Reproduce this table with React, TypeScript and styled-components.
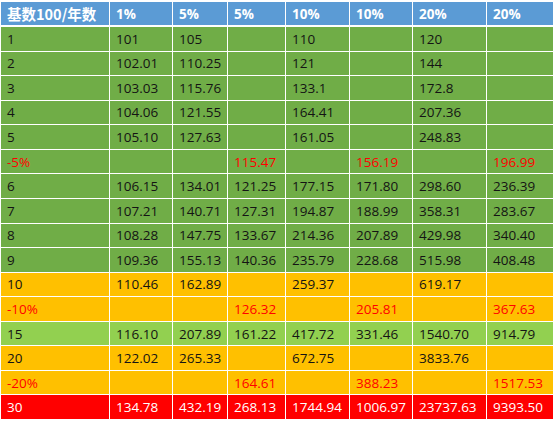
import React from "react";
import styled, { createGlobalStyle } from "styled-components";

const Global = createGlobalStyle`
  html, body { margin: 0; padding: 0; background: #ffffff; }
  body { font-family: "Open Sans", "Noto Sans CJK SC", sans-serif; }
`;

type Tone = "head" | "green" | "yellow" | "lime" | "red";

const BG: Record<Tone, string> = {
  head: "#5b9bd5",
  green: "#70ad47",
  yellow: "#ffc000",
  lime: "#92d050",
  red: "#ff0000",
};

const Sheet = styled.div`
  display: grid;
  grid-template-columns: 108px 62px 54px 57px 63px 62px 73px 66px;
  grid-template-rows: 24px repeat(16, 1fr);
  gap: 1px;
  height: 417px;
  width: 552px;
  margin: 2px 0 0 1px;
  background: #ffffff;
`;

const Row = styled.div`
  display: contents;
`;

const Cell = styled.div<{ $tone: Tone; $neg?: boolean }>`
  display: flex;
  align-items: center;
  padding-left: 6px;
  background: ${(p) => BG[p.$tone]};
  color: ${(p) =>
    p.$neg ? "#ff0000" : p.$tone === "head" || p.$tone === "red" ? "#ffffff" : "#141414"};
  font-size: 13.5px;
  font-weight: ${(p) => (p.$tone === "head" ? 700 : 400)};
  margin-bottom: ${(p) => (p.$tone === "head" ? "1px" : "0")};
  white-space: nowrap;
  overflow: hidden;
`;

const HeadLabel = styled.span`
  font-family: "Noto Sans CJK SC", "Open Sans", sans-serif;
  font-size: 14.5px;
  font-weight: 700;
`;

type R = { tone: Tone; neg?: boolean; cells: string[] };

const rows: R[] = [
  { tone: "green", cells: ["1", "101", "105", "", "110", "", "120", ""] },
  { tone: "green", cells: ["2", "102.01", "110.25", "", "121", "", "144", ""] },
  { tone: "green", cells: ["3", "103.03", "115.76", "", "133.1", "", "172.8", ""] },
  { tone: "green", cells: ["4", "104.06", "121.55", "", "164.41", "", "207.36", ""] },
  { tone: "green", cells: ["5", "105.10", "127.63", "", "161.05", "", "248.83", ""] },
  { tone: "green", neg: true, cells: ["-5%", "", "", "115.47", "", "156.19", "", "196.99"] },
  { tone: "green", cells: ["6", "106.15", "134.01", "121.25", "177.15", "171.80", "298.60", "236.39"] },
  { tone: "green", cells: ["7", "107.21", "140.71", "127.31", "194.87", "188.99", "358.31", "283.67"] },
  { tone: "green", cells: ["8", "108.28", "147.75", "133.67", "214.36", "207.89", "429.98", "340.40"] },
  { tone: "green", cells: ["9", "109.36", "155.13", "140.36", "235.79", "228.68", "515.98", "408.48"] },
  { tone: "yellow", cells: ["10", "110.46", "162.89", "", "259.37", "", "619.17", ""] },
  { tone: "yellow", neg: true, cells: ["-10%", "", "", "126.32", "", "205.81", "", "367.63"] },
  { tone: "lime", cells: ["15", "116.10", "207.89", "161.22", "417.72", "331.46", "1540.70", "914.79"] },
  { tone: "yellow", cells: ["20", "122.02", "265.33", "", "672.75", "", "3833.76", ""] },
  { tone: "yellow", neg: true, cells: ["-20%", "", "", "164.61", "", "388.23", "", "1517.53"] },
  { tone: "red", cells: ["30", "134.78", "432.19", "268.13", "1744.94", "1006.97", "23737.63", "9393.50"] },
];

const head = ["1%", "5%", "5%", "10%", "10%", "20%", "20%"];

export default function App() {
  return (
    <>
      <Global />
      <Sheet>
        <Row>
          <Cell $tone="head">
            <HeadLabel>基数100/年数</HeadLabel>
          </Cell>
          {head.map((h, i) => (
            <Cell key={i} $tone="head">
              {h}
            </Cell>
          ))}
        </Row>
        {rows.map((r, ri) => (
          <Row key={ri}>
            {r.cells.map((c, ci) => (
              <Cell key={ci} $tone={r.tone} $neg={r.neg}>
                {c}
              </Cell>
            ))}
          </Row>
        ))}
      </Sheet>
    </>
  );
}
